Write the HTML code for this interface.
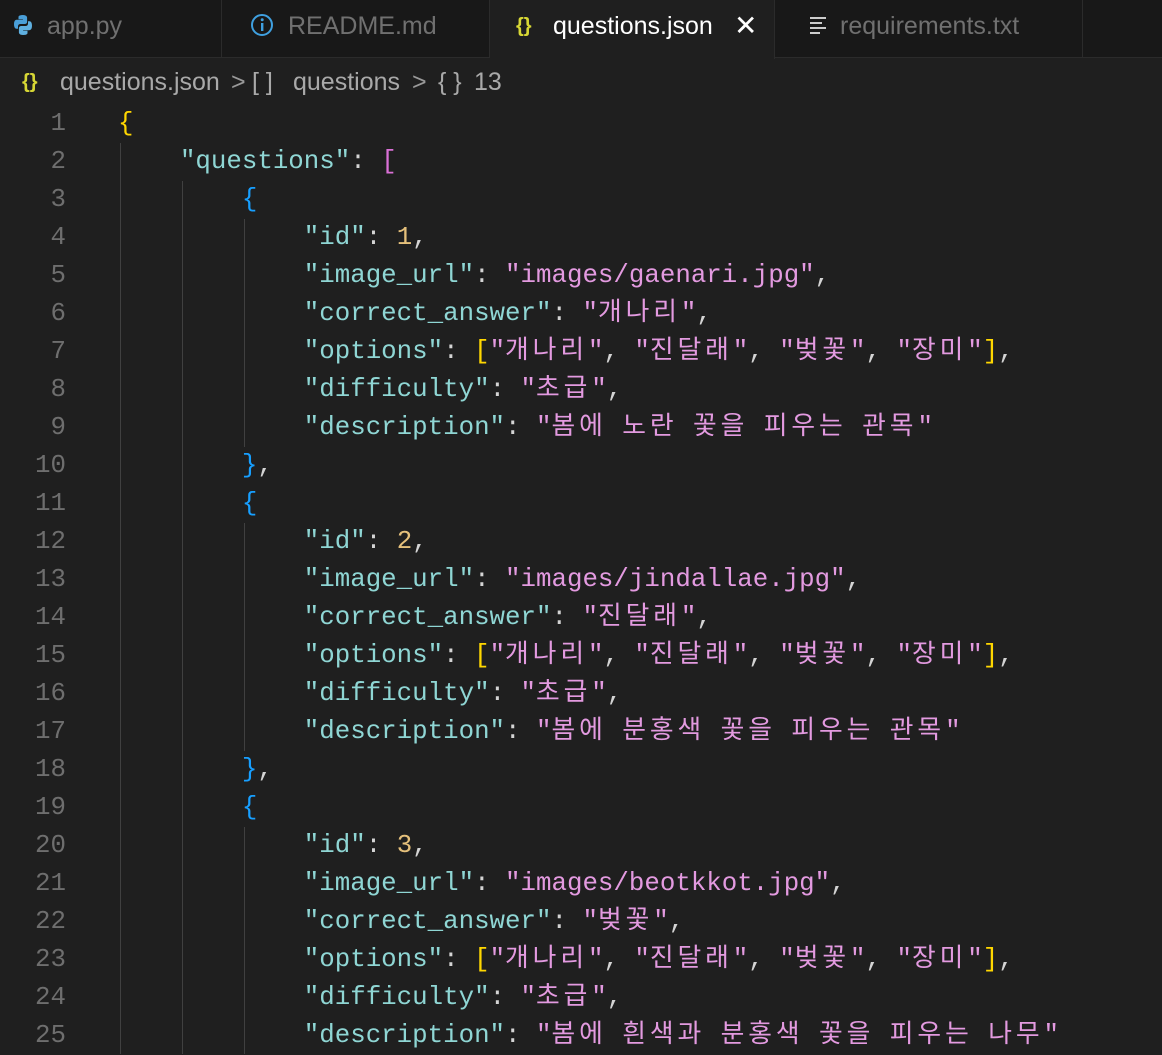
<!DOCTYPE html>
<html><head><meta charset="utf-8"><style>
*{margin:0;padding:0;box-sizing:border-box}
body{width:1162px;height:1054px;background:#1f1f1f;overflow:hidden;position:relative;font-family:"Liberation Sans","Noto Sans CJK KR",sans-serif}
.tabs{position:absolute;left:0;top:0;width:1162px;height:58px;background:#181818;border-bottom:1px solid #2b2b2b}
.tab{position:absolute;top:0;height:58px;border-right:1px solid #2b2b2b;color:#707070;font-size:25px;line-height:52px;white-space:nowrap}
.tab.act{background:#1f1f1f;color:#fff;height:59px}
.bc{position:absolute;left:0;top:66px;width:600px;height:32px;font-size:25px;color:#a9a9a9;white-space:nowrap;line-height:32px}
.bc span{position:absolute;top:0}
.code{position:absolute;left:0;top:105px;font-family:"Liberation Mono","Noto Sans CJK KR",monospace;font-size:25.8px}
.ln{position:absolute;left:0;width:66px;text-align:right;color:#6e6e6e;height:38px;line-height:38px}
.l{position:absolute;left:118px;white-space:pre;height:38px;line-height:38px;color:#d4d4d4}
.k{color:#8fd6d4}.s{color:#e39ae0}.n{color:#e5c07b}.y{color:#ffd700}.p{color:#da70d6}.b{color:#179fff}
.h{letter-spacing:3.9px}
.g{position:absolute;width:1px;background:#404040}
</style></head><body>
<div class="tabs">
 <div class="tab" style="left:0;width:222px">
  <svg style="position:absolute;left:11px;top:13px" width="24" height="24" viewBox="0 0 24 24"><path d="M11.8 2c-4.6 0-4.3 2-4.3 2v2.2h4.4v.6H5.8S3 6.5 3 11.2s2.5 4.5 2.5 4.5H7v-2.2s-.1-2.5 2.4-2.5h4.3s2.4 0 2.4-2.3V4.9S16.5 2 11.8 2z" fill="#4a9fd8"/><path d="M12.2 22c4.6 0 4.3-2 4.3-2v-2.2h-4.4v-.6h6.1S21 17.5 21 12.8s-2.5-4.5-2.5-4.5H17v2.2s.1 2.5-2.4 2.5h-4.3s-2.4 0-2.4 2.3v3.8S7.5 22 12.2 22z" fill="#5fb0e0"/></svg>
  <span style="position:absolute;left:47px">app.py</span></div>
 <div class="tab" style="left:222px;width:268px">
  <svg style="position:absolute;left:28px;top:13px" width="24" height="24" viewBox="0 0 24 24"><circle cx="12" cy="12" r="10" fill="none" stroke="#3fa0e0" stroke-width="2"/><rect x="11" y="10" width="2.4" height="8" fill="#3fa0e0"/><circle cx="12.2" cy="6.8" r="1.5" fill="#3fa0e0"/></svg>
  <span style="position:absolute;left:66px">README.md</span></div>
 <div class="tab act" style="left:490px;width:285px">
  <span style="position:absolute;left:26px;color:#d7d735;font-weight:bold;font-size:20px">{}</span>
  <span style="position:absolute;left:63px">questions.json</span>
  <span style="position:absolute;left:244px;font-size:28px">✕</span></div>
 <div class="tab" style="left:775px;width:308px">
  <svg style="position:absolute;left:35px;top:16px" width="18" height="18" viewBox="0 0 18 18"><rect x="0" y="1" width="16" height="2" fill="#ccc"/><rect x="0" y="6" width="12" height="2" fill="#ccc"/><rect x="0" y="11" width="16" height="2" fill="#ccc"/><rect x="0" y="16" width="10" height="2" fill="#ccc"/></svg>
  <span style="position:absolute;left:65px">requirements.txt</span></div>
</div>
<div class="bc">
 <span style="left:22px;color:#d7d735;font-weight:bold;font-size:20px">{}</span>
 <span style="left:60px">questions.json</span>
 <span style="left:231px;color:#999">&gt;</span>
 <span style="left:252px">[ ]</span>
 <span style="left:293px">questions</span>
 <span style="left:412px;color:#999">&gt;</span>
 <span style="left:438px">{ }</span>
 <span style="left:474px">13</span>
</div>
<div class="g" style="left:120px;top:143px;height:911px"></div>
<div class="g" style="left:182px;top:181px;height:873px"></div>
<div class="g" style="left:244px;top:219px;height:228px"></div>
<div class="g" style="left:244px;top:523px;height:228px"></div>
<div class="g" style="left:244px;top:827px;height:227px"></div>
<div class="code">
<div class="ln" style="top:0">1</div><div class="l" style="top:0"><span class="y">{</span></div>
<div class="ln" style="top:38px">2</div><div class="l" style="top:38px">    <span class="k">"questions"</span>: <span class="p">[</span></div>
<div class="ln" style="top:76px">3</div><div class="l" style="top:76px">        <span class="b">{</span></div>
<div class="ln" style="top:114px">4</div><div class="l" style="top:114px">            <span class="k">"id"</span>: <span class="n">1</span>,</div>
<div class="ln" style="top:152px">5</div><div class="l" style="top:152px">            <span class="k">"image_url"</span>: <span class="s">"images/gaenari.jpg"</span>,</div>
<div class="ln" style="top:190px">6</div><div class="l" style="top:190px">            <span class="k">"correct_answer"</span>: <span class="s">"<span class="h">개나리</span>"</span>,</div>
<div class="ln" style="top:228px">7</div><div class="l" style="top:228px">            <span class="k">"options"</span>: <span class="y">[</span><span class="s">"<span class="h">개나리</span>"</span>, <span class="s">"<span class="h">진달래</span>"</span>, <span class="s">"<span class="h">벚꽃</span>"</span>, <span class="s">"<span class="h">장미</span>"</span><span class="y">]</span>,</div>
<div class="ln" style="top:266px">8</div><div class="l" style="top:266px">            <span class="k">"difficulty"</span>: <span class="s">"<span class="h">초급</span>"</span>,</div>
<div class="ln" style="top:304px">9</div><div class="l" style="top:304px">            <span class="k">"description"</span>: <span class="s">"<span class="h">봄에</span> <span class="h">노란</span> <span class="h">꽃을</span> <span class="h">피우는</span> <span class="h">관목</span>"</span></div>
<div class="ln" style="top:342px">10</div><div class="l" style="top:342px">        <span class="b">}</span>,</div>
<div class="ln" style="top:380px">11</div><div class="l" style="top:380px">        <span class="b">{</span></div>
<div class="ln" style="top:418px">12</div><div class="l" style="top:418px">            <span class="k">"id"</span>: <span class="n">2</span>,</div>
<div class="ln" style="top:456px">13</div><div class="l" style="top:456px">            <span class="k">"image_url"</span>: <span class="s">"images/jindallae.jpg"</span>,</div>
<div class="ln" style="top:494px">14</div><div class="l" style="top:494px">            <span class="k">"correct_answer"</span>: <span class="s">"<span class="h">진달래</span>"</span>,</div>
<div class="ln" style="top:532px">15</div><div class="l" style="top:532px">            <span class="k">"options"</span>: <span class="y">[</span><span class="s">"<span class="h">개나리</span>"</span>, <span class="s">"<span class="h">진달래</span>"</span>, <span class="s">"<span class="h">벚꽃</span>"</span>, <span class="s">"<span class="h">장미</span>"</span><span class="y">]</span>,</div>
<div class="ln" style="top:570px">16</div><div class="l" style="top:570px">            <span class="k">"difficulty"</span>: <span class="s">"<span class="h">초급</span>"</span>,</div>
<div class="ln" style="top:608px">17</div><div class="l" style="top:608px">            <span class="k">"description"</span>: <span class="s">"<span class="h">봄에</span> <span class="h">분홍색</span> <span class="h">꽃을</span> <span class="h">피우는</span> <span class="h">관목</span>"</span></div>
<div class="ln" style="top:646px">18</div><div class="l" style="top:646px">        <span class="b">}</span>,</div>
<div class="ln" style="top:684px">19</div><div class="l" style="top:684px">        <span class="b">{</span></div>
<div class="ln" style="top:722px">20</div><div class="l" style="top:722px">            <span class="k">"id"</span>: <span class="n">3</span>,</div>
<div class="ln" style="top:760px">21</div><div class="l" style="top:760px">            <span class="k">"image_url"</span>: <span class="s">"images/beotkkot.jpg"</span>,</div>
<div class="ln" style="top:798px">22</div><div class="l" style="top:798px">            <span class="k">"correct_answer"</span>: <span class="s">"<span class="h">벚꽃</span>"</span>,</div>
<div class="ln" style="top:836px">23</div><div class="l" style="top:836px">            <span class="k">"options"</span>: <span class="y">[</span><span class="s">"<span class="h">개나리</span>"</span>, <span class="s">"<span class="h">진달래</span>"</span>, <span class="s">"<span class="h">벚꽃</span>"</span>, <span class="s">"<span class="h">장미</span>"</span><span class="y">]</span>,</div>
<div class="ln" style="top:874px">24</div><div class="l" style="top:874px">            <span class="k">"difficulty"</span>: <span class="s">"<span class="h">초급</span>"</span>,</div>
<div class="ln" style="top:912px">25</div><div class="l" style="top:912px">            <span class="k">"description"</span>: <span class="s">"<span class="h">봄에</span> <span class="h">흰색과</span> <span class="h">분홍색</span> <span class="h">꽃을</span> <span class="h">피우는</span> <span class="h">나무</span>"</span></div>
</div>
</body></html>
